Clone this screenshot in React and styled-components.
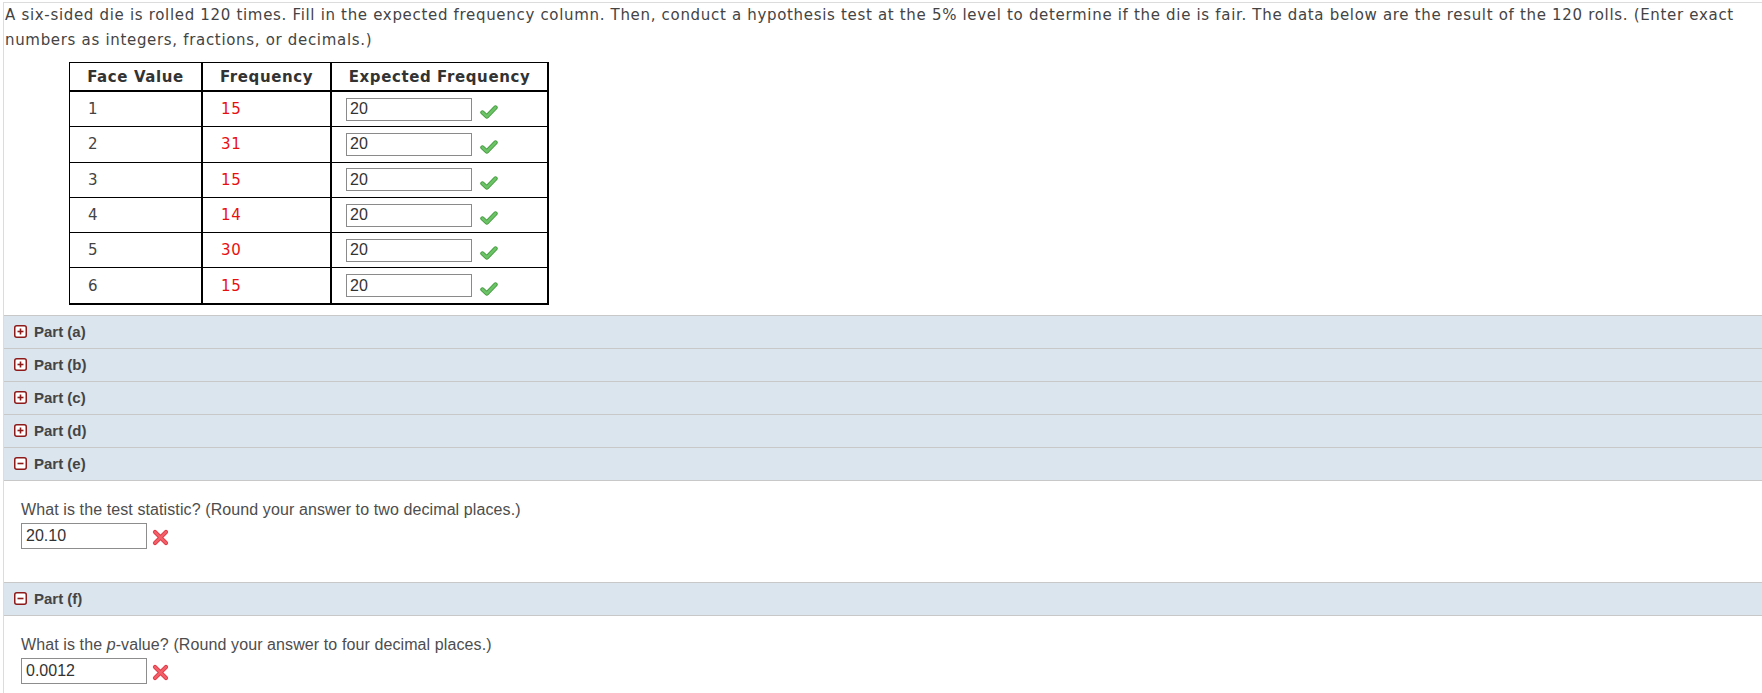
import React from 'react';
import styled, { createGlobalStyle } from 'styled-components';

const GlobalStyle = createGlobalStyle`
  html, body { margin: 0; padding: 0; background: #fff; }
  body { font-family: "DejaVu Sans", Verdana, sans-serif; }
`;

const Frame = styled.div`
  margin: 2px 0 0 3px;
  border-top: 1px solid #dcdcdc;
  border-left: 1px solid #dcdcdc;
  min-height: 720px;
`;

const Intro = styled.p`
  margin: 0;
  padding-left: 1px;
  font: 15px/25px "DejaVu Sans", Verdana, sans-serif;
  letter-spacing: 0.68px;
  color: #444;
`;

const DataTable = styled.table`
  margin: 9px 0 0 65px;
  border-collapse: separate;
  border-spacing: 0;
  border-top: 1px solid #000;
  border-left: 1px solid #000;
  border-right: 2px solid #000;
  border-bottom: 2px solid #000;
  font: 15px "DejaVu Sans", Verdana, sans-serif;
  letter-spacing: 0.6px;
  color: #444;
`;

const HeadCell = styled.th`
  width: ${(p) => p.$w}px;
  height: 27px;
  padding: 0;
  text-align: center;
  font-weight: bold;
  color: #333;
  border-bottom: 2px solid #000;
  border-right: ${(p) => (p.$last ? 'none' : '2px solid #000')};
`;

const Cell = styled.td`
  height: 34.3px;
  padding: 0 0 0 ${(p) => p.$pad ?? 18}px;
  vertical-align: middle;
  color: ${(p) => (p.$red ? '#e8100f' : '#444')};
  border-right: ${(p) => (p.$last ? 'none' : '2px solid #000')};
  border-bottom: ${(p) => (p.$bottom ? 'none' : '1px solid #000')};
`;

const CellInner = styled.div`
  display: flex;
  align-items: center;
  gap: 8px;
`;

const TableInput = styled.input`
  box-sizing: border-box;
  width: 126px;
  height: 23px;
  margin: 0;
  padding: 0 3px;
  border: 1px solid #8a8a8a;
  font: 16px "Liberation Sans", Arial, sans-serif;
  letter-spacing: 0;
  color: #333;
  background: #fff;
  outline: none;
`;

const Parts = styled.div`
  margin-top: 10px;
`;

const PartBar = styled.div`
  display: flex;
  align-items: center;
  gap: 7px;
  height: 32px;
  padding-left: 10px;
  background: #dae5ee;
  border-top: 1px solid #c8c8c8;
  font: bold 15px "Liberation Sans", Arial, sans-serif;
  color: #444;
`;

const PartBody = styled.div`
  padding: 20px 0 33px 17px;
  border-top: 1px solid #c8c8c8;
  background: #fff;
`;

const Question = styled.div`
  font: 16px/18px "Liberation Sans", Arial, sans-serif;
  letter-spacing: 0.1px;
  color: #4d4d4d;
  margin-bottom: 4px;
`;

const AnswerRow = styled.div`
  display: flex;
  align-items: center;
  gap: 5px;
`;

const AnswerInput = styled.input`
  box-sizing: border-box;
  width: 126px;
  height: 26px;
  margin: 0;
  padding: 0 4px;
  border: 1px solid #8d8d8d;
  font: 16px "Liberation Sans", Arial, sans-serif;
  color: #333;
  background: #fff;
  outline: none;
`;

const CheckIcon = () => (
  <svg width="18" height="16" viewBox="0 0 18 16" style={{ marginTop: 6 }}>
    <path d="M2.5 8.5 L6.8 12.5 L15.5 3.5" fill="none" stroke="#3f9a3a" strokeWidth="4.4" strokeLinecap="round" strokeLinejoin="round" />
    <path d="M2.5 8.5 L6.8 12.5 L15.5 3.5" fill="none" stroke="#6cc266" strokeWidth="2.6" strokeLinecap="round" strokeLinejoin="round" />
  </svg>
);

const CrossIcon = () => (
  <svg width="17" height="17" viewBox="0 0 17 17" style={{ marginTop: 4 }}>
    <path d="M3 3 L14 14 M14 3 L3 14" fill="none" stroke="#e23a45" strokeWidth="4.2" strokeLinecap="round" />
    <path d="M3 3 L14 14 M14 3 L3 14" fill="none" stroke="#f2616a" strokeWidth="2.4" strokeLinecap="round" />
  </svg>
);

const ToggleIcon = ({ open }) => (
  <svg width="13" height="13" viewBox="0 0 13 13">
    <rect x="0.75" y="0.75" width="11.5" height="11.5" rx="2" fill="#fff" stroke="#8e1a1a" strokeWidth="1.5" />
    <path d="M3.5 6.5 H9.5" stroke="#8e1a1a" strokeWidth="1.6" />
    {!open && <path d="M6.5 3.5 V9.5" stroke="#8e1a1a" strokeWidth="1.6" />}
  </svg>
);

const rows = [
  [1, 15],
  [2, 31],
  [3, 15],
  [4, 14],
  [5, 30],
  [6, 15],
];

const Part = ({ label, open, children }) => (
  <>
    <PartBar>
      <ToggleIcon open={open} />
      <span>Part ({label})</span>
    </PartBar>
    {open && <PartBody>{children}</PartBody>}
  </>
);

export default function App() {
  return (
    <>
      <GlobalStyle />
      <Frame>
        <Intro>
          A six-sided die is rolled 120 times. Fill in the expected frequency column. Then, conduct a hypothesis test at the 5% level to determine if the die is fair. The data below are the result of the 120 rolls. (Enter exact numbers as integers, fractions, or decimals.)
        </Intro>
        <DataTable>
          <thead>
            <tr>
              <HeadCell $w={131}>Face Value</HeadCell>
              <HeadCell $w={127}>Frequency</HeadCell>
              <HeadCell $w={215} $last>Expected Frequency</HeadCell>
            </tr>
          </thead>
          <tbody>
            {rows.map(([face, freq], i) => {
              const bottom = i === rows.length - 1;
              return (
                <tr key={face}>
                  <Cell $bottom={bottom}>{face}</Cell>
                  <Cell $red $bottom={bottom}>{freq}</Cell>
                  <Cell $last $bottom={bottom} $pad={14}>
                    <CellInner>
                      <TableInput defaultValue="20" readOnly />
                      <CheckIcon />
                    </CellInner>
                  </Cell>
                </tr>
              );
            })}
          </tbody>
        </DataTable>
        <Parts>
          <Part label="a" />
          <Part label="b" />
          <Part label="c" />
          <Part label="d" />
          <Part label="e" open>
            <Question>What is the test statistic? (Round your answer to two decimal places.)</Question>
            <AnswerRow>
              <AnswerInput defaultValue="20.10" readOnly />
              <CrossIcon />
            </AnswerRow>
          </Part>
          <Part label="f" open>
            <Question>
              What is the <i>p</i>-value? (Round your answer to four decimal places.)
            </Question>
            <AnswerRow>
              <AnswerInput defaultValue="0.0012" readOnly />
              <CrossIcon />
            </AnswerRow>
          </Part>
        </Parts>
      </Frame>
    </>
  );
}
